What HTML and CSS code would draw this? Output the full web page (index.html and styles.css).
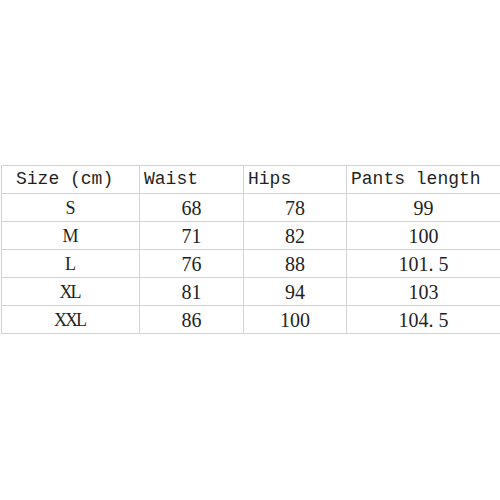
FILE: index.html
```html
<!DOCTYPE html>
<html>
<head>
<meta charset="utf-8">
<link rel="stylesheet" href="styles.css">
</head>
<body>
<table class="sizes">
  <colgroup>
    <col class="c1"><col class="c2"><col class="c3"><col class="c4">
  </colgroup>
  <thead>
    <tr class="head">
      <th class="first">Size (cm)</th>
      <th>Waist</th>
      <th>Hips</th>
      <th>Pants length</th>
    </tr>
  </thead>
  <tbody>
    <tr><td class="sz">S</td><td>68</td><td>78</td><td>99</td></tr>
    <tr><td class="sz">M</td><td>71</td><td>82</td><td>100</td></tr>
    <tr><td class="sz">L</td><td>76</td><td>88</td><td>101<span class="pt">.</span>5</td></tr>
    <tr><td class="sz">XL</td><td>81</td><td>94</td><td>103</td></tr>
    <tr><td class="sz">XXL</td><td>86</td><td>100</td><td>104<span class="pt">.</span>5</td></tr>
  </tbody>
</table>
</body>
</html>
```
FILE: styles.css
```css
html, body {
  margin: 0;
  padding: 0;
  background: #ffffff;
}

.sizes {
  margin: 165px 0 0 1px;
  width: 499px;
  border-collapse: collapse;
  table-layout: fixed;
  color: #1f1f1f;
}

.c1 { width: 138px; }
.c2 { width: 104px; }
.c3 { width: 103px; }
.c4 { width: 154px; }

.sizes th,
.sizes td {
  border: 1px solid #d3d3d3;
  padding: 0;
  white-space: nowrap;
  overflow: hidden;
}

.sizes th {
  height: 27px;
  line-height: 27px;
  font-family: "Liberation Mono", monospace;
  font-size: 18px;
  font-weight: normal;
  text-align: left;
  padding-left: 4px;
}

.sizes th.first {
  padding-left: 14px;
}

.sizes td {
  height: 25px;
  line-height: 25px;
  padding-top: 2px;
  font-family: "Liberation Serif", serif;
  font-size: 20px;
  text-align: center;
}

.sizes td.sz {
  font-size: 18px;
  letter-spacing: -2px;
  text-indent: -2px;
}

.pt {
  display: inline-block;
  width: 10px;
  text-align: left;
  letter-spacing: 0;
}
```
